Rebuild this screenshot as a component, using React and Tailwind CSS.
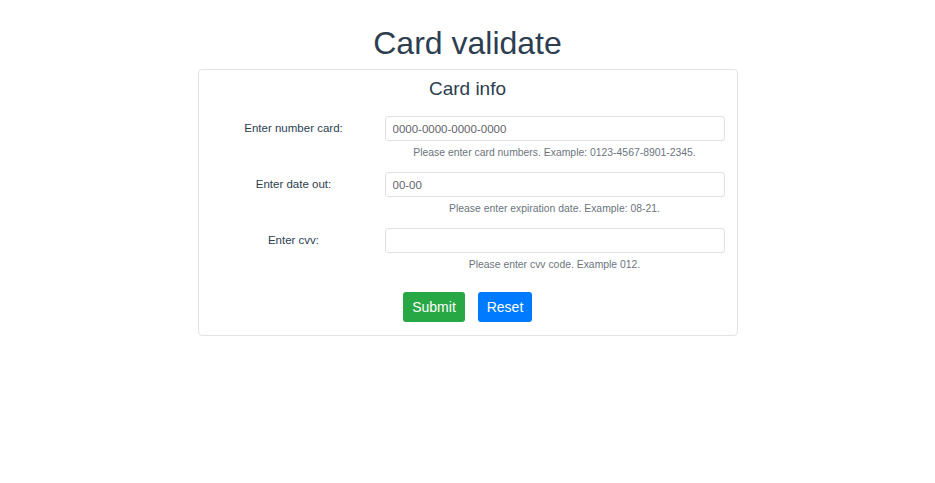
import React, { useState } from 'react';

const fields = [
  { id: 'number', label: 'Enter number card:', placeholder: '0000-0000-0000-0000', help: 'Please enter card numbers. Example: 0123-4567-8901-2345.' },
  { id: 'date', label: 'Enter date out:', placeholder: '00-00', help: 'Please enter expiration date. Example: 08-21.' },
  { id: 'cvv', label: 'Enter cvv:', placeholder: '', help: 'Please enter cvv code. Example 012.' },
];

const App = () => {
  const [values, setValues] = useState({ number: '', date: '', cvv: '' });

  const reset = () => setValues({ number: '', date: '', cvv: '' });

  return (
    <div className="min-h-screen bg-white font-['Liberation_Sans',Arial,sans-serif] text-[#2c3e50]">
      <div className="flex flex-col items-center pt-[24px]">
        <h1 className="text-[32px] leading-[38px] mb-[7px]">Card validate</h1>

        <form
          className="w-[540px] border border-[#e3e3e3] rounded-[4px] px-[12px] pt-[7px] pb-[13px]"
          onSubmit={(e) => e.preventDefault()}
        >
          <h2 className="text-center text-[19px] leading-[23px] mb-[16px]">Card info</h2>

          {fields.map((f) => (
            <div key={f.id} className="flex gap-[8px] mb-[12px]">
              <label htmlFor={f.id} className="w-[166px] h-[25px] flex items-center justify-center text-[11.5px]">
                {f.label}
              </label>
              <div className="w-[340px] flex flex-col">
                <input
                  id={f.id}
                  type="text"
                  value={values[f.id]}
                  placeholder={f.placeholder}
                  onChange={(e) => setValues({ ...values, [f.id]: e.target.value })}
                  className="h-[25px] w-full border border-[#e0e0e0] rounded-[3px] px-[7px] text-[11.5px] text-[#495057] placeholder-[#5f6469] outline-none"
                />
                <p className="mt-[5px] text-center text-[10.4px] leading-[14px] text-[#6c757d]">{f.help}</p>
              </div>
            </div>
          ))}

          <div className="flex justify-center gap-[13px] pt-[8px]">
            <button type="submit" className="h-[30px] w-[62px] rounded-[3px] bg-[#28a745] text-white text-[14px]">
              Submit
            </button>
            <button type="button" onClick={reset} className="h-[30px] w-[54px] rounded-[3px] bg-[#007bff] text-white text-[14px]">
              Reset
            </button>
          </div>
        </form>
      </div>
    </div>
  );
};

export default App;
